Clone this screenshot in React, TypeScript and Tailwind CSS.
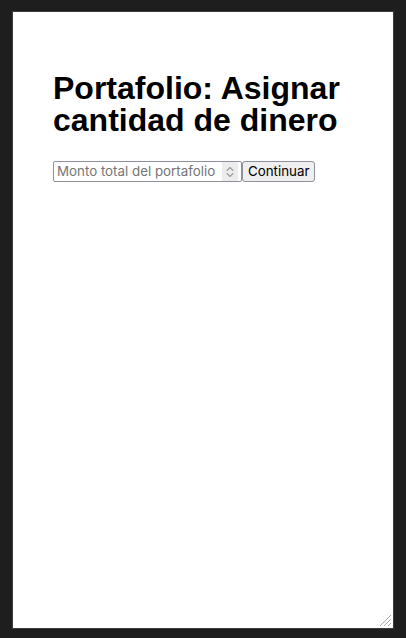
import React from "react";

function Spinner() {
  return (
    <span className="flex h-[19px] w-[16px] shrink-0 items-center justify-center bg-[#ececec]">
      <svg width="8" height="12" viewBox="0 0 8 12" fill="none" stroke="#9a9a9a" strokeWidth="1.1" strokeLinecap="round" strokeLinejoin="round">
        <path d="M1 4.5 L4 1.5 L7 4.5" />
        <path d="M1 7.5 L4 10.5 L7 7.5" />
      </svg>
    </span>
  );
}

function ResizeHandle() {
  return (
    <svg width="13" height="13" viewBox="0 0 13 13" className="self-end" stroke="#a8a8a8" strokeWidth="1">
      <path d="M12 1 L1 12" />
      <path d="M12 5 L5 12" />
      <path d="M12 9 L9 12" />
    </svg>
  );
}

export default function App() {
  return (
    <div className="flex h-[638px] w-[406px] bg-[#1e1e1e] pl-[12px] pr-[12px] pt-[11px] pb-[9px]">
      <div className="flex flex-1 flex-col border border-[#3c3c3c] bg-white">
        <div className="flex-1 px-[40px] pt-[60px]">
          <h1 className="font-['Liberation_Sans',Arial,sans-serif] text-[32px] font-bold leading-[32px] text-black">
            Portafolio: Asignar cantidad de dinero
          </h1>
          <div className="mt-[25px] flex items-center font-['Inter',sans-serif] text-[13.33px]">
            <label className="flex h-[21px] w-[189px] items-center border border-[#8f8f9d] rounded-[2px] pl-[3px] pr-[3px]">
              <input
                type="text"
                placeholder="Monto total del portafolio"
                className="min-w-0 flex-1 bg-transparent text-[13.33px] text-black outline-none placeholder:text-[#757575]"
              />
              <Spinner />
            </label>
            <button
              type="button"
              className="h-[21px] rounded-[3px] border border-[#8f8f9d] bg-[#efefef] px-[5px] text-[13.33px] leading-none text-black"
            >
              Continuar
            </button>
          </div>
        </div>
        <div className="flex justify-end pr-[1px] pb-[1px]">
          <ResizeHandle />
        </div>
      </div>
    </div>
  );
}
